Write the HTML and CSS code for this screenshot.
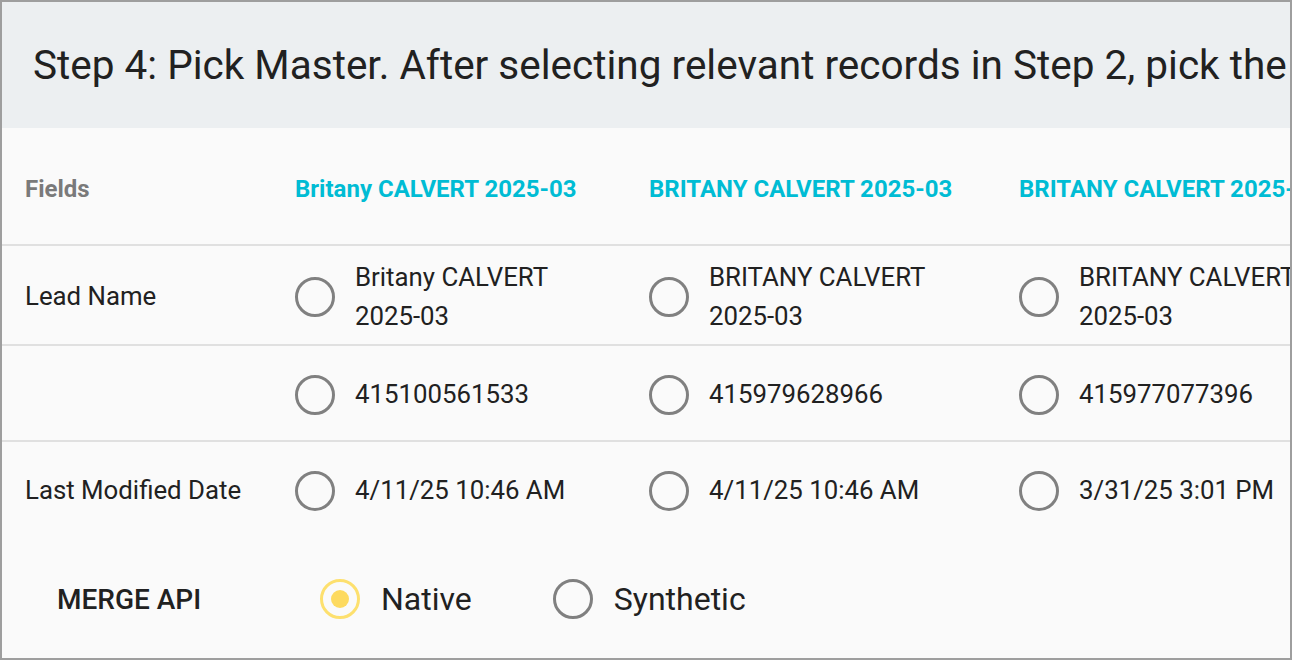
FILE: index.html
```html
<!DOCTYPE html>
<html lang="en">
  <head>
    <meta charset="UTF-8" />
    <meta name="viewport" content="width=device-width, initial-scale=1.0" />
    <title>Pick Master</title>
    <link rel="stylesheet" href="styles.css">
  </head>
  <body>
    <div class="frame">
      <div class="step-title">Step 4: Pick Master. After selecting relevant records in Step 2, pick the master record and the fields to keep.</div>

      <div class="grid">
        <div class="row head">
          <div class="label">Fields</div>
          <div class="col-title">Britany CALVERT 2025-03</div>
          <div class="col-title">BRITANY CALVERT 2025-03</div>
          <div class="col-title">BRITANY CALVERT 2025-03</div>
        </div>

        <div class="row">
          <div class="label">Lead Name</div>
          <label class="cell"><span class="radio"></span><span class="val">Britany CALVERT 2025-03</span></label>
          <label class="cell"><span class="radio"></span><span class="val">BRITANY CALVERT 2025-03</span></label>
          <label class="cell"><span class="radio"></span><span class="val">BRITANY CALVERT 2025-03</span></label>
        </div>

        <div class="row">
          <div class="label"></div>
          <label class="cell"><span class="radio"></span><span class="val">415100561533</span></label>
          <label class="cell"><span class="radio"></span><span class="val">415979628966</span></label>
          <label class="cell"><span class="radio"></span><span class="val">415977077396</span></label>
        </div>

        <div class="row last">
          <div class="label">Last Modified Date</div>
          <label class="cell"><span class="radio"></span><span class="val">4/11/25 10:46 AM</span></label>
          <label class="cell"><span class="radio"></span><span class="val">4/11/25 10:46 AM</span></label>
          <label class="cell"><span class="radio"></span><span class="val">3/31/25 3:01 PM</span></label>
        </div>
      </div>

      <div class="merge">
        <div class="merge-label">MERGE API</div>
        <label class="option"><span class="radio checked"></span>Native</label>
        <label class="option"><span class="radio"></span>Synthetic</label>
      </div>
    </div>
  </body>
</html>
```

FILE: styles.css
```css
* {
  box-sizing: border-box;
}
body {
  margin: 0;
  font-family: Roboto, "Liberation Sans", sans-serif;
  color: #212121;
  background: #fafafa;
}
.frame {
  width: 1292px;
  height: 660px;
  border: 2px solid #9e9e9e;
  background: #fafafa;
  overflow: hidden;
}
.step-title {
  height: 126px;
  background: #eceff1;
  padding-left: 31px;
  display: flex;
  align-items: center;
  font-size: 40.5px;
  white-space: nowrap;
  overflow: hidden;
}
.grid {
  width: 1387px;
}
.row {
  display: grid;
  grid-template-columns: 293px 354px 370px 370px;
  min-height: 96px;
  border-bottom: 2px solid #e0e0e0;
  align-items: center;
  font-size: 25.8px;
  line-height: 38.5px;
}
.row.head {
  height: 118px;
  padding-top: 6px;
}
.row.last {
  border-bottom: none;
  min-height: 94px;
}
.label {
  padding-left: 23px;
  padding-top: 2px;
}
.head .label {
  font-size: 24px;
  font-weight: 700;
  color: #7a7a7a;
  padding-top: 0;
}
.col-title {
  font-size: 24px;
  font-weight: 700;
  color: #00bcd4;
  white-space: nowrap;
}
.cell {
  display: flex;
  align-items: center;
  padding: 12px 40px 9px 0;
}
.radio {
  flex: none;
  width: 40px;
  height: 40px;
  border: 3.5px solid #808080;
  border-radius: 50%;
  margin-right: 20px;
  display: flex;
  align-items: center;
  justify-content: center;
}
.radio.checked {
  border-color: #fde06e;
}
.radio.checked::after {
  content: "";
  width: 18px;
  height: 18px;
  border-radius: 50%;
  background: #fdda5f;
}
.merge {
  display: flex;
  align-items: center;
  height: 122px;
  padding: 4px 0 0 55px;
}
.merge-label {
  width: 263px;
  font-size: 28px;
  font-weight: 500;
}
.option {
  display: flex;
  align-items: center;
  font-size: 32px;
  margin-right: 81px;
}
.option .radio {
  margin-right: 21px;
}
```
